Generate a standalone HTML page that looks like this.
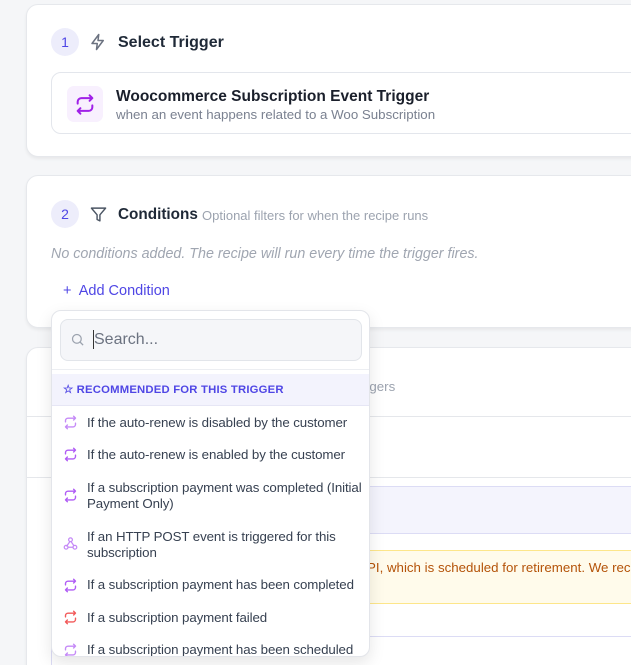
<!DOCTYPE html>
<html><head><style>
*{box-sizing:border-box;margin:0;padding:0}
html,body{width:631px;height:665px;overflow:hidden}
body{background:#f5f6f8;font-family:"Liberation Sans",sans-serif;position:relative}
.card{position:absolute;left:26px;width:640px;background:#fff;border:1px solid #e6e8ec;border-radius:12px;box-shadow:0 2px 3px rgba(0,0,0,.06)}
.num{position:absolute;width:28px;height:28px;border-radius:50%;background:#ededfb;color:#4f46e5;font-size:14px;text-align:center;line-height:28px}
.abs{position:absolute;white-space:nowrap}
.pop{position:absolute;left:51px;top:310px;width:319px;height:347px;background:#fff;border:1px solid #e3e5ea;border-radius:10px;box-shadow:0 6px 16px rgba(0,0,0,.1);overflow:hidden}
.item{position:absolute;left:35px;font-size:13.3px;color:#374151;line-height:16px;letter-spacing:-.1px}
.ic{position:absolute;left:11px}
</style></head><body>
<div class="card" style="top:4px;height:153px">
 <div class="num" style="left:24px;top:23px">1</div>
 <svg class="abs" style="left:62px;top:27px" width="18" height="20" viewBox="0 0 24 24" fill="none" stroke="#6b7280" stroke-width="2" stroke-linejoin="round"><path d="M13 2L4 14h7l-1 8 9-12h-7l1-8z"/></svg>
 <div class="abs" style="left:91px;top:29px;font-size:16px;font-weight:bold;color:#1f2937">Select Trigger</div>
 <div style="position:absolute;left:24px;top:67px;width:620px;height:62px;border:1px solid #e3e6ec;border-radius:10px"></div>
 <div style="position:absolute;left:40px;top:81px;width:36px;height:36px;border-radius:7px;background:#f8f0fe"></div>
 <svg class="abs" style="left:47px;top:88px" width="22" height="23" viewBox="0 0 24 24" fill="none" stroke="#a021e8" stroke-width="2.2" stroke-linecap="round" stroke-linejoin="round"><path d="M17 2l3 3-3 3M4 11V9a4 4 0 0 1 4-4h12M7 22l-3-3 3-3M20 13v2a4 4 0 0 1-4 4H4"/></svg>
 <div class="abs" style="left:89px;top:83px;font-size:15.5px;font-weight:bold;color:#1a1f2b">Woocommerce Subscription Event Trigger</div>
 <div class="abs" style="left:89px;top:102px;font-size:13.3px;color:#7a8190">when an event happens related to a Woo Subscription</div>
</div>
<div class="card" style="top:175px;height:153px">
 <div class="num" style="left:24px;top:24px">2</div>
 <svg class="abs" style="left:63px;top:30px" width="17" height="17" viewBox="0 0 24 24" fill="none" stroke="#4b5563" stroke-width="2" stroke-linejoin="round"><path d="M2 3h20l-8 9.5V21l-4-2v-6.5z"/></svg>
 <div class="abs" style="left:91px;top:30px;font-size:15.3px;font-weight:bold;color:#1f2937">Conditions</div>
 <div class="abs" style="left:175px;top:32px;font-size:13px;color:#9ca3af">Optional filters for when the recipe runs</div>
 <div class="abs" style="left:24px;top:70px;font-size:14.3px;font-style:italic;color:#a0a6b1">No conditions added. The recipe will run every time the trigger fires.</div>
 <div class="abs" style="left:36px;top:107px;font-size:14.5px;color:#4f46e5">+&nbsp; Add Condition</div>
</div>
<div class="card" style="top:347px;height:340px">
 <div class="abs" style="left:335px;top:31px;font-size:13.3px;color:#9ca3af">ggers</div>
 <div style="position:absolute;left:0;top:68px;width:640px;border-top:1px solid #e5e7eb"></div>
 <div style="position:absolute;left:0;top:129px;width:640px;border-top:1px solid #e5e7eb"></div>
 <div style="position:absolute;left:24px;top:138px;width:620px;height:48px;background:#f4f4fd;border:1px solid #dcdcf5;border-radius:4px"></div>
 <div style="position:absolute;left:24px;top:202px;width:620px;height:54px;background:#fffbeb;border:1px solid #fde68a;border-radius:4px"></div>
 <div class="abs" style="left:340px;top:212px;font-size:13.3px;color:#b45309">PI, which is scheduled for retirement. We recom</div>
 <div style="position:absolute;left:24px;top:288px;width:620px;height:60px;border:1px solid #dcdcf5;border-radius:6px"></div>
</div>
<div class="pop">
 <div style="position:absolute;left:8px;top:8px;width:302px;height:42px;background:#f5f6f9;border:1px solid #e2e5ea;border-radius:8px"></div>
 <svg class="abs" style="left:18px;top:21px" width="15" height="15" viewBox="0 0 24 24" fill="none" stroke="#9ca3af" stroke-width="2"><circle cx="11" cy="11" r="7"/><path d="M16 16l5 5"/></svg>
 <div class="abs" style="left:41px;top:19px;width:1px;height:19px;background:#333"></div>
 <div class="abs" style="left:42px;top:20px;font-size:16px;color:#6b7280">Search...</div>
 <div style="position:absolute;left:0;top:58px;width:319px;border-top:1px solid #eceef2"></div>
 <div style="position:absolute;left:0;top:63px;width:319px;height:32px;background:#f3f3fd;border-bottom:1px solid #e6e6f5"></div>
 <div class="abs" style="left:11px;top:72px;font-size:11.3px;font-weight:bold;color:#4f46e5;letter-spacing:.2px">☆ RECOMMENDED FOR THIS TRIGGER</div>
 <svg class="ic" style="top:103px" width="15" height="17" viewBox="0 0 24 24" fill="none" stroke="#c58af7" stroke-width="2.2" stroke-linecap="round" stroke-linejoin="round"><path d="M17 2l3 3-3 3M4 11V9a4 4 0 0 1 4-4h12M7 22l-3-3 3-3M20 13v2a4 4 0 0 1-4 4H4"/></svg>
 <div class="item" style="top:104px">If the auto-renew is disabled by the customer</div>
 <svg class="ic" style="top:135px" width="15" height="17" viewBox="0 0 24 24" fill="none" stroke="#b05cf5" stroke-width="2.2" stroke-linecap="round" stroke-linejoin="round"><path d="M17 2l3 3-3 3M4 11V9a4 4 0 0 1 4-4h12M7 22l-3-3 3-3M20 13v2a4 4 0 0 1-4 4H4"/></svg>
 <div class="item" style="top:136px">If the auto-renew is enabled by the customer</div>
 <svg class="ic" style="top:176px" width="15" height="17" viewBox="0 0 24 24" fill="none" stroke="#b05cf5" stroke-width="2.2" stroke-linecap="round" stroke-linejoin="round"><path d="M17 2l3 3-3 3M4 11V9a4 4 0 0 1 4-4h12M7 22l-3-3 3-3M20 13v2a4 4 0 0 1-4 4H4"/></svg>
 <div class="item" style="top:169px">If a subscription payment was completed (Initial<br>Payment Only)</div>
 <svg class="ic" style="top:224px" width="15" height="17" viewBox="0 0 24 24" fill="none" stroke="#c58af7" stroke-width="2" stroke-linecap="round" stroke-linejoin="round"><circle cx="12" cy="6" r="3"/><circle cx="5" cy="18" r="3"/><circle cx="19" cy="18" r="3"/><path d="M11 9l-5 7M8 18h8M13 9l4 6"/></svg>
 <div class="item" style="top:218px">If an HTTP POST event is triggered for this<br>subscription</div>
 <svg class="ic" style="top:266px" width="15" height="17" viewBox="0 0 24 24" fill="none" stroke="#b05cf5" stroke-width="2.2" stroke-linecap="round" stroke-linejoin="round"><path d="M17 2l3 3-3 3M4 11V9a4 4 0 0 1 4-4h12M7 22l-3-3 3-3M20 13v2a4 4 0 0 1-4 4H4"/></svg>
 <div class="item" style="top:266px">If a subscription payment has been completed</div>
 <svg class="ic" style="top:298px" width="15" height="17" viewBox="0 0 24 24" fill="none" stroke="#f25a5a" stroke-width="2.2" stroke-linecap="round" stroke-linejoin="round"><path d="M17 2l3 3-3 3M4 11V9a4 4 0 0 1 4-4h12M7 22l-3-3 3-3M20 13v2a4 4 0 0 1-4 4H4"/></svg>
 <div class="item" style="top:299px">If a subscription payment failed</div>
 <svg class="ic" style="top:331px" width="15" height="17" viewBox="0 0 24 24" fill="none" stroke="#c58af7" stroke-width="2.2" stroke-linecap="round" stroke-linejoin="round"><path d="M17 2l3 3-3 3M4 11V9a4 4 0 0 1 4-4h12M7 22l-3-3 3-3M20 13v2a4 4 0 0 1-4 4H4"/></svg>
 <div class="item" style="top:331px">If a subscription payment has been scheduled</div>
</div>
</body></html>
